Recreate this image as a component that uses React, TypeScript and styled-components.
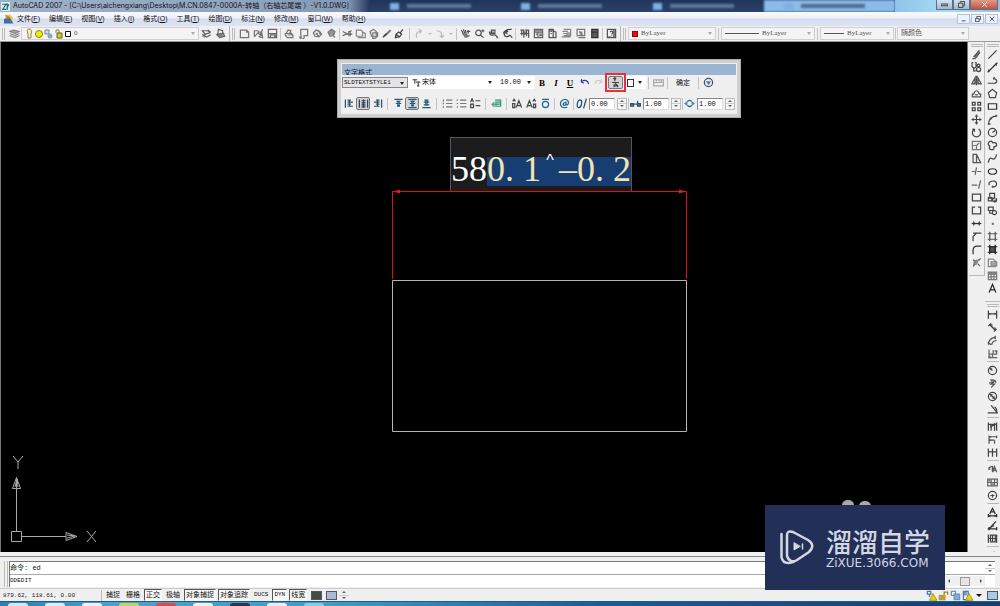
import React from 'react';
import styled, { createGlobalStyle } from 'styled-components';

const sans = `'Liberation Sans', 'Noto Sans CJK SC', sans-serif`;
const serif = `'Liberation Serif', 'Noto Sans CJK SC', serif`;
const mono = `'Liberation Mono', 'Noto Sans CJK SC', monospace`;

const GlobalStyle = createGlobalStyle`
  * { box-sizing: border-box; }
  body { margin: 0; background: #f0f0f0; font-family: ${sans}; color: #222; overflow: hidden; }
  button, select, input { font: inherit; color: inherit; margin: 0; padding: 0; border: 0; border-radius: 0; background: none; outline: none; }
  select { appearance: none; }
`;

/* ---------- icons: stroked (s) and filled (f) outlines on a 16-unit grid ---------- */

type Shape = { s?: string; f?: string; c?: string };

const shapes: Record<string, Shape> = {
  layers: { s: 'M1 5l6-2 8 2-6 3zM1 8l8 3 6-3M1 11l8 3 6-3', f: 'M1 5l6-2 8 2-6 3z', c: '#888' },
  layerPrev: { s: 'M2 4h8l3 3-7 2zM2 9l6 4 6-3M10 3l4 3', f: 'M1 12l5-4v6z', c: '#666' },
  layerState: { s: 'M5 2l6 2v4l-7 1zM2 9l5 5 7-2-2-5', f: 'M2 9l5 5 7-2-5-5z', c: '#666' },
  newDoc: { s: 'M2 3h9l3 3v8H2zM11 3v3h3', c: '#777' },
  open: { s: 'M2 13V4h5l1 2h5M2 13l5-6 3 3 4-8M9 13l4-5 1 6z', c: '#777' },
  save: { s: 'M2 2h12v12H2zM2 8h12M5 14v-4h7v4', f: 'M10 10h2v4h-2z', c: '#666' },
  plot: { s: 'M3 8l3-5 4 1-2 4M2 8h8l3 3v3H5l-3-3zM9 6l4 4', f: 'M5 9h7v2H5z', c: '#777' },
  preview: { s: 'M4 11V2h10v9H9M3 13a3 3 0 1 0 5-2', f: 'M2 11h4v4H2z', c: '#777' },
  publish: { s: 'M2 7l4-4 5 2 3 4-4 4-6-1zM6 8l5 5M9 3l3 6', f: 'M5 7h4v3H5z', c: '#777' },
  globe: { s: 'M3 6l5-4 5 3-2 6-5 1zM10 10l3 4', f: 'M3 6l5-4 5 3-2 6-5-1z', c: '#777' },
  cut: { s: 'M1 5l8 4h6M1 11l8-3M9 6l5-2', f: 'M9 6h4v6H9z', c: '#666' },
  copyClip: { s: 'M2 12V3h7l2 2v7zM5 12v2h10V8l-4-2', c: '#888' },
  paste: { s: 'M3 5l5-3 4 3v7H5zM7 7h7v5l-4 3H7z', c: '#777' },
  match: { s: 'M3 13l5-5', f: 'M6 9l7-7 2 2-7 7-6 4z', c: '#444' },
  brush: { s: 'M9 7l4-5M3 9l5 4 3-4-4-3zM3 9l-1 5 5-1', c: '#444' },
  undoGrey: { s: 'M4 14q-3-8 7-10M11 4l-4-2M11 4L8 8', c: '#bbb' },
  redoGrey: { s: 'M2 4q9 0 8 10M10 14l-3-3M10 14l3-4', c: '#bbb' },
  pan: { s: 'M2 3l3 6M5 2l2 6M8 3l1 5M10 12l4-1M12 3v5M10 5h5', f: 'M3 8h8v6H7z', c: '#555' },
  zoomRt: { s: 'M6 3a4 4 0 1 0 1 8a4 4 0 0 0-1-8M10 11l4 3M11 4h4M13 2v4', c: '#555' },
  zoomWin: { s: 'M5 3h5v5H5zM2 5q0 7 7 5M9 9l5 4', f: 'M3 5h6v4H3zM12 13h3v2h-3z', c: '#555' },
  zoomPrev: { s: 'M14 2q-9-1-12 6M9 5a4 4 0 1 0 2 5M11 10l4 4', f: 'M8 3v7L3 7z', c: '#444' },
  props: { s: 'M2 3h5v11M9 3h5v11M2 8h12M4 3v8M11 3v9', f: 'M6 5h4v5H6z', c: '#555' },
  design: { s: 'M2 2h12v12H2zM2 6h12M7 6v8M4 9h2M9 9h4M9 11h4', f: 'M2 2h12v3H2z', c: '#666' },
  palettes: { s: 'M3 2h6v12H3zM9 4l4 2v8H9M5 5h2M5 8h2', f: 'M3 2h6v3H3z', c: '#555' },
  sheets: { s: 'M4 2h10v9H4M2 5h8M3 8h7M1 13h13', f: 'M8 6h6v7H6z', c: '#888' },
  markup: { s: 'M3 2h11v9H3zM5 14h10M6 5l5 5', f: 'M7 5h4v5H7z', c: '#777' },
  calc: { s: 'M4 2h9v12H4zM4 6h9M6 9h1M10 9h1M6 12h1M10 12h1', f: 'M4 2h9v12H4z', c: '#333' },
  help: { s: 'M2 2h12v12H2zM6 6q2-3 4 0q0 2-2 3M8 11v1', f: 'M10 2h4v12h-4zM2 12h5v2H2z', c: '#555' },
  erase: { s: 'M2 14h5M4 12l8-10M7 13l6-8', f: 'M3 11l9-9 1 3-6 8z', c: '#555' },
  copyObj: { s: 'M2 4a3 3 0 1 0 5 0a3 3 0 1 0-5 0M9 5a2 2 0 1 0 4 0a2 2 0 1 0-4 0M8 11a3 3 0 1 0 6 0a3 3 0 1 0-6 0M4 8v5h3', c: '#444' },
  mirror: { s: 'M8 1v14M6 4v9H1zM10 4v9h5z', f: 'M6 9v4H2zM10 9v4h4z', c: '#555' },
  offset: { s: 'M2 13V9q3 0 3-3q3-4 6 0q0 3 3 3v4zM6 10h4', c: '#555' },
  array: { s: 'M2 2h4v4H2zM10 2h4v4h-4zM2 10h4v4H2zM10 10h4v4h-4z', c: '#444' },
  move: { s: 'M8 2v12M2 8h12', f: 'M8 0l3 4H5zM8 16l3-4H5zM0 8l4-3v6zM16 8l-4-3v6z', c: '#444' },
  rotate: { s: 'M5 3a6 6 0 1 0 6 0M5 3H2M5 3v4', c: '#444' },
  scale: { s: 'M2 2h12v12H2zM2 8h6v6M8 8l4-4', c: '#777' },
  stretch: { s: 'M3 2v12h11L8 2zM8 2v12', c: '#555' },
  trim: { s: 'M1 8h5M9 8h6M8 2l-2 11', c: '#666' },
  extend: { s: 'M1 9h8M11 9h2M14 2l-3 12', c: '#666' },
  breakPt: { s: 'M2 3h12v10H2z', c: '#444' },
  break2: { s: 'M6 3H2v10h12V3h-4', c: '#444' },
  join: { s: 'M1 8h14', f: 'M7 8L3 4v8zM9 8l4-4v8z', c: '#333' },
  chamfer: { s: 'M3 15V8l5-5h7M3 3h5', c: '#444' },
  fillet: { s: 'M3 15V9q0-6 6-6h6', c: '#333' },
  explode: { s: 'M3 14l3-4M11 5l3-3M3 4l3 2M10 10l3 3', f: 'M4 5l8-2-3 8-6 1z', c: '#666' },
  line: { s: 'M2 14L14 2', c: '#444' },
  xline: { s: 'M1 15L15 1', f: 'M1 15l1-5 3 3zM15 1l-1 5-3-3z', c: '#333' },
  pline: { s: 'M1 12h9q5 0 4-4q-1-3-5-2M9 6l2-3', c: '#444' },
  polygon: { s: 'M8 2l6 5-2 7H4L2 7z', c: '#444' },
  rect: { s: 'M2 4h12v8H2z', c: '#333' },
  arc: { s: 'M2 15Q3 3 14 3', f: 'M2 13h3v3H1zM12 1h3v3h-3zM4 5h3v3H4z', c: '#444' },
  circle: { s: 'M8 2a6 6 0 1 0 0 12a6 6 0 0 0 0-12M8 8l4-3', c: '#444' },
  cloud: { s: 'M3 3q4-3 5 1q6-1 6 3q0 3-4 3q1 5-4 4q-4-1-2-5q-4-3-1-6', c: '#444' },
  spline: { s: 'M2 14q1-8 5-6q5 3 7-6', c: '#444' },
  ellipse: { s: 'M8 4c8 0 8 8 0 8s-8-8 0-8', c: '#333' },
  ellArc: { s: 'M3 5q10-5 11 2q0 5-7 5M7 12l2-2M3 5l0 4', c: '#444' },
  block: { s: 'M4 2h7v7H4zM2 8h5v5H2zM9 9a3 3 0 1 0 4 0', f: 'M10 11h4v4h-4z', c: '#444' },
  makeBlock: { s: 'M2 3h7v5H2zM8 10a3 3 0 1 0 5-1a3 3 0 0 0-5 1M4 8v4h4', c: '#444' },
  point: { f: 'M7 7h3v3H7z', c: '#444' },
  hatch: { s: 'M4 1v14M12 1v14M1 4h14M1 12h14', c: '#555' },
  gradient: { s: 'M4 1v14M12 1v14M1 4h14M1 12h14', f: 'M3 3h10v10H3z', c: '#222' },
  region: { s: 'M2 3h7l3 3v8H2zM6 7h8v6H6z', f: 'M6 8h5v4H6z', c: '#888' },
  table: { s: 'M2 3h12v11H2zM2 6h12M2 10h12M6 3v11M10 3v11', f: 'M2 3h12v3H2z', c: '#777' },
  textA: { s: 'M3 14L8 2l5 12M5 10h6', c: '#222' },
  dimLin: { s: 'M2 2v12M14 2v12M2 7h12', f: 'M2 7l3-2v4zM14 7l-3-2v4z', c: '#444' },
  dimAli: { s: 'M4 4l8 8M2 6l4-4M10 14l4-4', f: 'M3 3h5v5zM8 8l5 5V8z', c: '#444' },
  dimArc: { s: 'M2 14q0-9 10-11M7 14q0-5 7-6M12 1v5M1 11l5 3', c: '#555' },
  dimOrd: { s: 'M3 2v12h12M3 9h6V3M8 13V9h6V4', f: 'M11 3h4v3h-4zM2 12h4v3H2z', c: '#666' },
  dimRad: { s: 'M8 2a6 6 0 1 0 0 12a6 6 0 0 0 0-12M8 8L4 5', f: 'M3 3l5 2-3 3z', c: '#444' },
  dimJog: { s: 'M5 3q8-1 8 4M11 5L6 9h5l-5 5M3 7h5', f: 'M5 2l6 3-4 3z', c: '#555' },
  dimDia: { s: 'M8 2a6 6 0 1 0 0 12a6 6 0 0 0 0-12M4 4l8 8', f: 'M4 4l5 1-4 4zM12 12l-5-1 4-4z', c: '#444' },
  dimAng: { s: 'M1 13h14L6 2M11 4q4 3 3 7', c: '#444' },
  dimQuick: { s: 'M2 2v12M14 2v12M2 5h12M6 14V8l5-4v10', f: 'M4 5h7L5 11z', c: '#444' },
  dimBase: { s: 'M3 2v12M3 4h11M3 9h8M11 9v5M14 2v4', f: 'M3 4l3-2v4zM3 9l3-2v4z', c: '#555' },
  dimCont: { s: 'M2 2v12M8 2v12M14 2v12M2 7h12', c: '#444' },
  leader: { s: 'M2 6l6-3M8 3v8M8 11l3-7 3 8M9 9h4', f: 'M1 9l5-1-3-3zM7 7h3v5H7z', c: '#555' },
  tol: { s: 'M1 3h14v10H1zM6 3v10M11 3v10M1 8h14', f: 'M2 4h3v3H2zM7 9h3v3H7z', c: '#666' },
  centerMark: { s: 'M8 2a6 6 0 1 0 0 12a6 6 0 0 0 0-12M8 6v5M5 8h6', c: '#444' },
  dimEdit: { s: 'M4 10l4-8 4 8M6 7h4M1 13h14M2 10v5M14 10v5', f: 'M1 13l4-2v4zM15 13l-4-2v4z', c: '#333' },
  dimTEdit: { s: 'M4 12L13 2M1 13h14M3 10v5M14 10v5', f: 'M4 12l5-6 2 3zM1 13l3-2v4z', c: '#333' },
  dimUpd: { s: 'M2 2v12M14 2v12M2 8h12M5 3h7v10H5zM8 3v10', c: '#444' },
  corner: { s: 'M9 14l6-8M13 14l2-4', c: '#777' },
  alignL: { s: 'M2 2v12M5 3h5M5 6h8M5 9h5M5 12h8M8 3v9', c: '#2c5068' },
  alignC: { s: 'M2 2v12M14 2v12M5 4h6M5 7h6M5 10h6M5 13h6M8 2v12', c: '#2c4058' },
  alignR: { s: 'M14 2v12M6 3h5M3 6h8M6 9h5M3 12h8M8 3v9', c: '#2c5068' },
  top: { s: 'M2 2h12M5 5h6M4 8h8M6 11h4', f: 'M6 5h4v8H6z', c: '#265a7c' },
  mid: { s: 'M2 2h12M2 14h12M5 5h6M4 8h8M6 11h4', f: 'M6 4h4v8H6z', c: '#265a7c' },
  bot: { s: 'M2 14h12M5 3h6M4 6h8M4 10h8', f: 'M6 3h4v8H6z', c: '#265a7c' },
  numList: { s: 'M2 2v3M2 7v2M2 12v2M6 3h9M6 8h9M6 13h9', c: '#777' },
  bullList: { s: 'M1 3h2M1 8h2M1 13h2M6 3h9M6 8h9M6 13h9', c: '#777' },
  upList: { s: 'M1 6l2-5 2 5M1 9h4v5H1zM8 4h7M8 11h7', c: '#444' },
  field: { s: 'M6 3h8v9H6M6 6h8M6 9h8', f: 'M0 9l5-4v3h4v3H5v3z', c: '#2a9a70' },
  upper: { s: 'M1 8h3v6H1zM6 14l4-10 4 10M7 11h5M1 5l2-3 2 3', c: '#444' },
  lower: { s: 'M1 14L5 4l4 10M3 11h5M11 9h3v5h-3zM10 5l2-3 2 3', c: '#444' },
  overline: { s: 'M3 2h10M8 5a4 4 0 1 0 0 9a4 4 0 0 0 0-9', c: '#1e6a94' },
  at: { s: 'M12 13q-4 2-8 0q-4-5 0-9q5-4 9 0q2 4-1 6q-2 0-2-5M10 7q-4-1-4 3q3 2 4-1', c: '#1e6a94' },
  oblique: { s: 'M7 3q-4-1-5 5q-1 6 2 6q4-1 4-6q1-4-1-5M15 1l-4 14', c: '#1e4a74' },
  track: { s: 'M1 8h4v4H1zM11 4v8h4V8h-4M6 9h4', f: 'M1 8h4v4H1zM11 8h4v4h-4z', c: '#27506e' },
  widthF: { s: 'M5 5q3-3 6 0M5 11q3 3 6 0', f: 'M0 8l5-4v8zM16 8l-5-4v8z', c: '#2b6c94' },
  undoBlue: { s: 'M3 7q9-5 11 3M3 7l1-4M3 7l4 2', c: '#33b' },
  redoLite: { s: 'M13 7Q4 2 3 10M13 7l-1-4M13 7l-4 2', c: '#ccc' },
  stack: { s: 'M7 1v5M5 3l2-2 2 2M3 8h10M6 15v-3l2-2 3 2v3M7 13h3', c: '#444' },
  ruler: { s: 'M1 4h14v9H1zM1 8h14M5 4v3M9 4v3M12 4v3', c: '#aaa' },
  options: { s: 'M8 2a6 6 0 1 0 0 12a6 6 0 0 0 0-12', f: 'M4 6h8l-4 6z', c: '#31557c' },
  tt: { s: 'M1 3h8M5 3v7M7 7h8M11 7v7M9 14h4', c: '#333' },
  tray1: { s: 'M2 2h5v4H2zM5 6v4', c: '#4a78b0' },
  unlock: { s: 'M9 7V3h5v4', f: 'M1 7h10v8H1z', c: '#a88400' },
  copyBlue: { s: 'M2 2h6v6H2zM6 6h8v8H6z', f: 'M6 6h8v8H6z', c: '#6a94c4' },
  tray4: { s: 'M2 2h7v12H2z', f: 'M2 2h5v6H2z', c: '#4a78b0' },
};

const Svg = styled.svg<{ $size: number }>`
  display: block;
  flex: none;
  width: ${(p) => p.$size}px;
  height: ${(p) => p.$size}px;
`;

function Icon({ name, size = 11, warn }: { name: string; size?: number; warn?: boolean }) {
  const { s, f, c = '#555' } = shapes[name];
  return (
    <Svg $size={size} viewBox="0 0 16 16" aria-hidden="true">
      {f && <path d={f} fill={c} fillOpacity={0.75} />}
      {s && <path d={s} fill="none" stroke={c} strokeWidth={1.8} />}
      {warn && <path d="M10 5l6 10H5z" fill="#f0d000" stroke="#987800" />}
    </Svg>
  );
}

/* ---------- frame ---------- */

const Window = styled.div`
  position: relative;
  display: flex;
  flex-direction: column;
  height: 100vh;
  overflow: hidden;
`;

const TitleBar = styled.header`
  display: flex;
  flex: none;
  align-items: center;
  height: 12px;
  background: linear-gradient(#20345a, #2b4268);
  overflow: hidden;
`;
const TitleText = styled.h1`
  display: flex;
  align-items: center;
  gap: 3px;
  flex: none;
  margin: 0;
  height: 12px;
  width: 370px;
  padding-left: 1px;
  font: 400 7px/12px Inter, 'Noto Sans CJK SC', sans-serif;
  color: #0c1220;
  white-space: nowrap;
  background: linear-gradient(90deg, #9db0c8, #93a6bf 60%, #8598b4 94%, #24385e);
`;
const BehindTabs = styled.div`
  display: flex;
  flex: 1;
  height: 12px;
  filter: blur(1px);
`;
const BehindTab = styled.div<{ $active?: boolean }>`
  display: flex;
  align-items: center;
  gap: 8px;
  flex: 1;
  padding-left: 20px;
  background: ${(p) => (p.$active ? '#8bbbe8' : 'transparent')};
  &::before { content: ''; width: 9px; height: 7px; background: #7fb0e4; }
  &::after { content: ''; width: 64px; height: 4px; background: ${(p) => (p.$active ? '#4a6c94' : '#60789c')}; }
`;
const TitleRight = styled.div`
  display: flex;
  justify-content: flex-end;
  align-items: flex-start;
  width: 105px;
  height: 12px;
  padding-right: 2px;
  background: linear-gradient(90deg, #8fc3ea, #a8dcf2 50%, #94bfe0);
`;
const CaptionButton = styled.button<{ $close?: boolean }>`
  display: flex;
  align-items: center;
  justify-content: center;
  width: ${(p) => (p.$close ? 28 : 17)}px;
  height: 10px;
  border: 1px solid #5a6f8a;
  border-top: 0;
  background: ${(p) => (p.$close ? 'linear-gradient(#e09a8c, #c8503c)' : 'linear-gradient(#d3e2f0, #a3b9d0)')};
  color: ${(p) => (p.$close ? '#fff' : '#333')};
`;

const MenuBar = styled.nav`
  display: flex;
  flex: none;
  align-items: center;
  gap: 3px;
  height: 14px;
  padding: 0 2px 0 4px;
  background: linear-gradient(#f8faff, #eef1fa 40%, #d8def0 50%, #dde3f5);
`;
const MenuItems = styled.div`
  display: flex;
  gap: 9px;
`;
const MenuItem = styled.button`
  font-size: 7px;
  line-height: 12px;
  white-space: nowrap;
  color: #111;
`;
const MdiButtons = styled.div`
  display: flex;
  margin-left: auto;
  gap: 1px;
`;
const MdiButton = styled.button`
  display: flex;
  align-items: center;
  justify-content: center;
  width: 13px;
  height: 10px;
  border: 1px solid #b4c4dc;
  background: #eaf2fc;
`;

/* ---------- toolbars ---------- */

const ToolRow = styled.div`
  display: flex;
  flex: none;
  height: 16px;
  background: #f0f0f0;
  border-bottom: 1px solid #999;
  overflow: hidden;
`;
const Strip = styled.div<{ $grow?: boolean }>`
  display: flex;
  align-items: center;
  flex: ${(p) => (p.$grow ? '1' : 'none')};
  padding-right: 2px;
  border-right: 1px solid ${(p) => (p.$grow ? 'transparent' : '#b4b4b4')};
`;
const Grip = styled.span`
  flex: none;
  width: 3px;
  height: 12px;
  margin: 0 2px 0 2px;
  border-left: 1px solid #bbb;
  border-right: 1px solid #bbb;
`;
const Group = styled.div`
  display: flex;
  align-items: center;
`;
const ToolButton = styled.button<{ $w?: number; $h?: number; $on?: boolean }>`
  display: flex;
  align-items: center;
  justify-content: center;
  flex: none;
  width: ${(p) => p.$w ?? 14}px;
  height: ${(p) => p.$h ?? 13}px;
  color: #333;
  border: ${(p) => (p.$on ? '1px solid #777' : '0')};
  border-radius: ${(p) => (p.$on ? 2 : 0)}px;
  background: ${(p) => (p.$on ? '#d4d4d4' : 'none')};
`;
const Sep = styled.span<{ $w?: number }>`
  flex: none;
  display: flex;
  justify-content: center;
  width: ${(p) => p.$w ?? 3}px;
  height: 12px;
  &::before { content: ''; width: 1px; background: #c4c4c4; }
`;
const Combo = styled.label<{ $w: number; $plain?: boolean }>`
  position: relative;
  display: flex;
  align-items: center;
  gap: 1px;
  flex: none;
  width: ${(p) => p.$w}px;
  height: 13px;
  padding: 0 10px 0 3px;
  border: 1px solid ${(p) => (p.$plain ? 'transparent' : '#d0d0d0')};
  background: ${(p) => (p.$plain ? '#fff' : '#f4f4f4')};
  font: 7px/11px ${serif};
  color: #555;
  select { flex: 1; min-width: 0; height: 11px; }
`;
const Arrow = styled.span<{ $dark?: boolean }>`
  position: absolute;
  right: 3px;
  top: 4px;
  border: 2px solid transparent;
  border-top: 3px solid ${(p) => (p.$dark ? '#222' : '#aaa')};
  border-bottom: 0;
  pointer-events: none;
`;
const Swatch = styled.span<{ $color: string }>`
  flex: none;
  width: 6px;
  height: 6px;
  margin-right: 2px;
  background: ${(p) => p.$color};
  border: 1px solid #a00;
`;
const LineSample = styled.span<{ $w: number }>`
  flex: none;
  width: ${(p) => p.$w}px;
  height: 1px;
  margin-right: 2px;
  background: #555;
`;
const DropMark = styled.button`
  width: 9px;
  height: 12px;
  display: flex;
  align-items: center;
  justify-content: center;
  &::before { content: ''; border: 2px solid transparent; border-top-color: #bbb; border-bottom: 0; }
`;

function Tools({ names, w, h }: { names: string[]; w?: number; h?: number }) {
  return (
    <>
      {names.map((n) => (
        <ToolButton key={n} type="button" aria-label={n} $w={w} $h={h}><Icon name={n} /></ToolButton>
      ))}
    </>
  );
}

/* ---------- work area ---------- */

const Work = styled.main`
  display: flex;
  flex: 1;
  min-height: 0;
  overflow: hidden;
`;
const Canvas = styled.section`
  position: relative;
  flex: 1;
  min-width: 0;
  background: #000;
  border-left: 1px solid #777;
  border-right: 1px solid #777;
  overflow: hidden;
`;
const Drawing = styled.svg`
  position: absolute;
  inset: 0;
  width: 100%;
  height: 100%;
`;
const Ucs = styled.svg`
  position: absolute;
  left: 9px;
  bottom: 5px;
  width: 90px;
  height: 92px;
`;
const Dock = styled.aside`
  display: flex;
  flex: none;
  align-items: flex-start;
  background: #f0f0f0;
  width: 32px;
  padding-left: 1px;
`;
const DockColumn = styled.div`
  display: flex;
  flex-direction: column;
  width: 16px;
  flex: none;
`;
const Palette = styled.div<{ $last?: boolean }>`
  display: flex;
  flex-direction: column;
  align-items: center;
  padding-bottom: ${(p) => (p.$last ? 0 : 6)}px;
  border-right: 1px solid #bbb;
  border-bottom: ${(p) => (p.$last ? 0 : 1)}px solid #bbb;
`;
const HGrip = styled.span`
  width: 12px;
  height: 3px;
  margin: 2px 0 1px;
  border-top: 1px solid #bbb;
  border-bottom: 1px solid #bbb;
`;
const HSep = styled.span`
  width: 12px;
  height: 1px;
  margin: 1px 0 2px;
  background: #bbb;
`;

/* ---------- text formatting window ---------- */

const Format = styled.form`
  position: absolute;
  left: 336px;
  top: 17px;
  width: 404px;
  height: 59px;
  padding: 4px;
  background: #efefef;
  border: 1px solid #aaa;
  box-shadow: inset 0 0 0 3px #cfcfcf;
  font: 7px/10px ${serif};
`;
const FormatTitle = styled.div`
  height: 11px;
  padding: 5px 0 0 2px;
  overflow: hidden;
  background: #9ab4d2;
  font: 7px/8px ${sans};
  color: #123;
`;
const FormatRow = styled.div`
  display: flex;
  align-items: center;
  height: 15px;
  & + & { margin-top: 6px; }
`;
const StyleBox = styled(Combo)`
  height: 11px;
  padding-left: 1px;
  border: 1px solid #888;
  background: #e4e4e4;
  font: 6px/9px ${mono};
  color: #111;
  select { height: 9px; }
`;
const FontBox = styled(Combo)`
  height: 13px;
  font-family: ${mono};
  color: #111;
`;
const Letter = styled(ToolButton)<{ $kind: 'b' | 'i' | 'u' }>`
  font: ${(p) => (p.$kind === 'i' ? 'italic ' : '')}700 9px/12px ${serif};
  text-decoration: ${(p) => (p.$kind === 'u' ? 'underline' : 'none')};
  color: #000;
`;
const StackFrame = styled.span`
  display: flex;
  align-items: center;
  justify-content: center;
  flex: none;
  width: 21px;
  height: 19px;
  border: 2px solid #e8303a;
`;
const OkButton = styled.button`
  width: 26px;
  font: 7px/12px ${sans};
  color: #111;
`;
const ColorBox = styled(Combo)`
  padding-left: 0;
  height: 13px;
  &::before { content: ''; width: 6px; height: 6px; border: 1px solid #333; background: #fff; }
`;
const NumberBox = styled.label`
  display: flex;
  align-items: center;
  flex: none;
  gap: 2px;
  input {
    width: 26px;
    height: 12px;
    padding-left: 1px;
    border: 1px solid #888;
    border-right-color: #ddd;
    border-bottom-color: #ddd;
    background: #fff;
    font: 7px/9px ${mono};
    color: #111;
  }
`;
const Spin = styled.span`
  display: flex;
  flex-direction: column;
  width: 10px;
  height: 12px;
  border: 1px solid #bbb;
  background: #f4f4f4;
`;
const SpinButton = styled.button<{ $down?: boolean }>`
  display: flex;
  flex: 1;
  align-items: center;
  justify-content: center;
  &::before {
    content: '';
    border: 2px solid transparent;
    border-${(p) => (p.$down ? 'top' : 'bottom')}-color: #567;
    border-${(p) => (p.$down ? 'bottom' : 'top')}: 0;
  }
  & + & { border-top: 1px solid #ccc; }
`;

function Numeric({ icon, label, value }: { icon: string; label: string; value: string }) {
  return (
    <NumberBox>
      <Icon name={icon} />
      <input aria-label={label} defaultValue={value} />
      <Spin>
        <SpinButton type="button" aria-label={`${label} up`} />
        <SpinButton type="button" $down aria-label={`${label} down`} />
      </Spin>
    </NumberBox>
  );
}

/* ---------- in-place dimension text ---------- */

const InPlace = styled.div`
  position: absolute;
  left: 449px;
  top: 95px;
  display: flex;
  align-items: flex-end;
  width: 182px;
  height: 54px;
  padding-bottom: 5px;
  background: #1c1c1c;
  border: 1px solid #555;
  border-bottom: 0;
  font: 36px/25px ${serif};
  color: #fff;
`;
const Run = styled.span<{ $sel?: boolean }>`
  display: flex;
  height: 29px;
  background: ${(p) => (p.$sel ? '#163e72' : 'none')};
  color: ${(p) => (p.$sel ? '#f3e3b0' : '#fff')};
`;
const Cell = styled.span<{ $mark?: boolean }>`
  width: 18px;
  text-align: ${(p) => (p.$mark ? 'center' : 'left')};
  font-family: ${(p) => (p.$mark ? sans : serif)};
  font-size: ${(p) => (p.$mark ? 16 : 36)}px;
  line-height: ${(p) => (p.$mark ? 7 : 25)}px;
  color: ${(p) => (p.$mark ? '#fff' : 'inherit')};
`;

/* ---------- command line, status, task bar ---------- */

const Command = styled.section`
  display: flex;
  flex: none;
  height: 36px;
  padding: 9px 5px 1px 4px;
  background: linear-gradient(#f0f0f0 4px, #888 4px, #888 5px, #f0f0f0 5px);
`;
const CommandGrip = styled.span`
  width: 4px;
  border-left: 1px solid #bbb;
  border-right: 1px solid #bbb;
`;
const CommandBody = styled.div`
  flex: 1;
  display: flex;
  flex-direction: column;
  margin-left: 1px;
  border-left: 1px solid #777;
  border-top: 1px solid #777;
  background: #fff;
`;
const CommandLine = styled.div`
  display: flex;
  align-items: center;
  flex: 1;
  font: 6px/12px ${mono};
  color: #111;
  & + & { border-top: 1px solid #aaa; }
  input { flex: 1; height: 11px; }
`;
const CommandLog = styled.span`
  flex: 1;
  font: 7px/12px ${mono};
`;
const Stepper = styled.div`
  display: flex;
  flex-direction: column;
  width: 10px;
  height: 12px;
`;
const HScroll = styled.div`
  display: flex;
  align-items: center;
  justify-content: space-between;
  width: 40px;
  height: 10px;
  margin-right: 10px;
  background: #f0f0f0;
`;
const Side = styled.button<{ $right?: boolean }>`
  display: flex;
  width: 8px;
  justify-content: center;
  &::before {
    content: '';
    border: 2px solid transparent;
    border-${(p) => (p.$right ? 'left' : 'right')}-color: #456;
    border-${(p) => (p.$right ? 'right' : 'left')}: 0;
  }
`;
const Thumb = styled.span`
  width: 10px;
  height: 9px;
  border: 1px solid #999;
  background: #e4e4e4;
`;
const Status = styled.footer`
  display: flex;
  flex: none;
  align-items: center;
  gap: 2px;
  height: 13px;
  padding-right: 2px;
  background: #f0f0f0;
  border-top: 1px solid #ccc;
`;
const Coords = styled.output`
  width: 102px;
  padding-left: 3px;
  font: 6px/11px ${mono};
  color: #222;
  border-right: 1px solid #bbb;
`;
const Mode = styled.button<{ $on?: boolean }>`
  height: 12px;
  padding: 0 1px;
  font: 7px/10px ${serif};
  white-space: nowrap;
  color: #111;
  border: 1px solid transparent;
  border-left-color: ${(p) => (p.$on ? '#555' : 'transparent')};
  border-top-color: ${(p) => (p.$on ? '#555' : 'transparent')};
  background: ${(p) => (p.$on ? '#f8f8f8' : 'none')};
`;
const ModeCode = styled(Mode)`
  font: 6px/10px ${mono};
`;
const Chip = styled.span<{ $color: string }>`
  width: 11px;
  height: 9px;
  margin-left: 2px;
  background: ${(p) => p.$color};
  border: 1px solid #556;
`;
const Tray = styled.div`
  display: flex;
  align-items: center;
  gap: 1px;
  margin-left: auto;
`;
const TrayMenu = styled(DropMark)`
  width: 10px;
  &::before { border-width: 3px; border-top-color: #111; border-bottom: 0; }
`;
const Taskbar = styled.div`
  display: flex;
  flex: none;
  align-items: flex-end;
  gap: 17px;
  height: 5px;
  padding: 0 24px 0 8px;
  overflow: hidden;
  background: linear-gradient(90deg, #2c7fb4, #4aa4cc 12%, #3f9cc6 33%, #1b5c96 60%, #153e70);
  border-top: 1px solid #1c5c8c;
`;
const TaskIcon = styled.span<{ $color: string }>`
  width: 20px;
  height: 3px;
  border-radius: 8px 8px 0 0;
  background: ${(p) => p.$color};
`;

/* ---------- site badge ---------- */

const Badge = styled.div`
  position: absolute;
  right: 55px;
  bottom: 16px;
  display: flex;
  align-items: center;
  gap: 11px;
  width: 180px;
  height: 85px;
  padding: 0 0 1px 14px;
  background: #222f57;
  color: #d3d7e2;
`;
const BadgeText = styled.div`
  font: 500 26px/32px 'Noto Sans CJK SC', sans-serif;
  white-space: nowrap;
`;
const BadgeSite = styled.div`
  font: 12px/12px 'DejaVu Sans', sans-serif;
`;

const menus = ['文件(F)', '编辑(E)', '视图(V)', '插入(I)', '格式(O)', '工具(T)', '绘图(D)', '标注(N)', '修改(M)', '窗口(W)', '帮助(H)'];
const modes: [string, boolean][] = [
  ['捕捉', false], ['栅格', false], ['正交', true], ['极轴', false], ['对象捕捉', true],
  ['对象追踪', true], ['DUCS', false], ['DYN', true], ['线宽', true],
];
const modify = ['erase', 'copyObj', 'mirror', 'offset', 'array', 'move', 'rotate', 'scale', 'stretch', 'trim', 'extend', 'breakPt', 'break2', 'join', 'chamfer', 'fillet', 'explode'];
const draw = ['line', 'xline', 'pline', 'polygon', 'rect', 'arc', 'circle', 'cloud', 'spline', 'ellipse', 'ellArc', 'block', 'makeBlock', 'point', 'hatch', 'gradient', 'region', 'table', 'textA'];
const dims = [
  ['dimLin', 'dimAli', 'dimArc', 'dimOrd'],
  ['dimRad', 'dimJog', 'dimDia', 'dimAng'],
  ['dimQuick', 'dimBase', 'dimCont'],
  ['leader', 'tol', 'centerMark'],
  ['dimEdit', 'dimTEdit', 'dimUpd'],
];

function WindowMark({ d, size = 7 }: { d: string; size?: number }) {
  return (
    <Svg $size={size} viewBox="0 0 8 8" fill="none" stroke="currentColor" aria-hidden="true">
      <path d={d} />
    </Svg>
  );
}

function TopTools() {
  return (
    <ToolRow>
      <Strip>
        <Grip />
        <ToolButton aria-label="layers"><Icon name="layers" /></ToolButton>
        <Combo $w={178}>
          <Svg $size={48} viewBox="0 0 48 48" aria-hidden="true">
            <path d="M3 24q-2-5 1-5q4 0 2 5v4H3z" fill="#f5f29a" stroke="#887" />
            <circle cx="14" cy="24" r="3.500" fill="#f0f000" stroke="#880" />
            <path d="M20 20h4v4h-4z" fill="#cde" stroke="#789" />
            <circle cx="25" cy="26" r="2.500" fill="#8ab" />
            <path d="M31 23v-3h3v3" fill="none" stroke="#884" />
            <path d="M32 23h5v5h-5z" fill="#cc2" stroke="#662" />
            <path d="M40.500 21.500h5v5h-5z" fill="#fff" stroke="#111" />
          </Svg>
          <select aria-label="图层"><option>0</option></select>
          <Arrow />
        </Combo>
        <Group><Tools names={['layerPrev', 'layerState']} /></Group>
      </Strip>
      <Strip>
        <Grip />
        <Group><Tools names={['newDoc', 'open', 'save']} /></Group>
        <Sep />
        <Group><Tools names={['plot', 'preview', 'publish', 'globe']} /></Group>
        <Sep />
        <Group><Tools w={13} names={['cut', 'copyClip', 'paste', 'match', 'brush']} /></Group>
        <Sep $w={7} />
        <ToolButton $w={12} aria-label="undo"><Icon name="undoGrey" /></ToolButton>
        <DropMark aria-label="undo list" />
        <ToolButton $w={12} aria-label="redo"><Icon name="redoGrey" /></ToolButton>
        <DropMark aria-label="redo list" />
        <Sep />
        <Group><Tools names={['pan', 'zoomRt', 'zoomWin', 'zoomPrev']} /></Group>
        <Sep />
        <Group><Tools names={['props', 'design', 'palettes', 'sheets', 'markup', 'calc']} /></Group>
        <Sep />
        <Tools names={['help']} />
      </Strip>
      <Strip $grow>
        <Grip />
        <Combo $w={88}><Swatch $color="#e01010" /><select aria-label="颜色"><option>ByLayer</option></select><Arrow /></Combo>
        <Sep $w={5} />
        <Combo $w={94}><LineSample $w={34} /><select aria-label="线型"><option>ByLayer</option></select><Arrow /></Combo>
        <Sep $w={5} />
        <Combo $w={74}><LineSample $w={20} /><select aria-label="线宽"><option>ByLayer</option></select><Arrow /></Combo>
        <Sep />
        <Combo $w={72}><select aria-label="打印样式"><option>随颜色</option></select><Arrow /></Combo>
      </Strip>
    </ToolRow>
  );
}

function TextFormat() {
  return (
    <Format onSubmit={(e) => e.preventDefault()}>
      <FormatTitle>文字格式</FormatTitle>
      <FormatRow>
        <StyleBox $w={66}><select aria-label="样式"><option>SLDTEXTSTYLE1</option></select><Arrow $dark /></StyleBox>
        <FontBox $w={88} $plain><Icon name="tt" size={9} /><select aria-label="字体"><option>宋体</option></select><Arrow $dark /></FontBox>
        <FontBox $w={39} $plain><select aria-label="文字高度"><option>10.00</option></select><Arrow $dark /></FontBox>
        <Letter type="button" $kind="b">B</Letter>
        <Letter type="button" $kind="i">I</Letter>
        <Letter type="button" $kind="u">U</Letter>
        <Tools names={['undoBlue', 'redoLite']} />
        <StackFrame><ToolButton type="button" aria-label="stack" $on $w={15}><Icon name="stack" /></ToolButton></StackFrame>
        <ColorBox $w={20} $plain><select aria-label="文字颜色"><option> </option></select><Arrow $dark /></ColorBox>
        <Sep $w={5} />
        <Tools names={['ruler']} />
        <Sep $w={5} />
        <OkButton type="submit">确定</OkButton>
        <Sep $w={5} />
        <Tools names={['options']} />
      </FormatRow>
      <FormatRow>
        <ToolButton type="button" aria-label="left"><Icon name="alignL" /></ToolButton>
        <ToolButton type="button" aria-label="center" $on><Icon name="alignC" /></ToolButton>
        <ToolButton type="button" aria-label="right"><Icon name="alignR" /></ToolButton>
        <Sep $w={7} />
        <ToolButton type="button" aria-label="top"><Icon name="top" /></ToolButton>
        <ToolButton type="button" aria-label="middle" $on><Icon name="mid" /></ToolButton>
        <ToolButton type="button" aria-label="bottom"><Icon name="bot" /></ToolButton>
        <Sep $w={7} />
        <Tools names={['numList', 'bullList', 'upList']} />
        <Sep $w={7} />
        <Tools names={['field']} />
        <Sep $w={7} />
        <Tools names={['upper', 'lower', 'overline']} />
        <Sep $w={5} />
        <Tools names={['at']} />
        <Sep $w={5} />
        <Numeric icon="oblique" label="倾斜角度" value="0.00" />
        <Sep />
        <Numeric icon="track" label="追踪" value="1.00" />
        <Sep />
        <Numeric icon="widthF" label="宽度比例" value="1.00" />
      </FormatRow>
    </Format>
  );
}

export default function App() {
  return (
    <Window>
      <GlobalStyle />
      <TitleBar>
        <TitleText>
          <Svg $size={9} viewBox="0 0 16 16" aria-hidden="true">
            <path d="M0 0h16v16H0z" fill="#d8eeee" />
            <path d="M2 4h7l-6 9h6M11 2v12M14 4l-4 8" fill="none" stroke="#256a70" strokeWidth="2" />
          </Svg>
          AutoCAD 2007 - [C:\Users\aichengxiang\Desktop\M.CN.0847-0000A-转轴（右轴芯尾端 ）-V1.0.DWG]
        </TitleText>
        <BehindTabs><BehindTab /><BehindTab /><BehindTab /><BehindTab $active /></BehindTabs>
        <TitleRight>
          <CaptionButton aria-label="minimize"><WindowMark d="M0 3.500h8v2H0z" /></CaptionButton>
          <CaptionButton aria-label="restore"><WindowMark d="M.500 2.500h5v5h-5zM2.500 2V.500h5v5H6" /></CaptionButton>
          <CaptionButton $close aria-label="close"><WindowMark d="M1 1l6 6M7 1L1 7" /></CaptionButton>
        </TitleRight>
      </TitleBar>
      <MenuBar>
        <Svg $size={10} viewBox="0 0 16 16" aria-hidden="true">
          <path d="M2 1h8l4 5v5H2z" fill="#f0c83c" />
          <path d="M0 8l9-3 6 10H0z" fill="#3c6ea8" />
          <path d="M2 1l8 4-4 4z" fill="#c87828" />
        </Svg>
        <MenuItems>
          {menus.map((m) => <MenuItem key={m}>{m.slice(0, 3)}<u>{m[3]}</u>)</MenuItem>)}
        </MenuItems>
        <MdiButtons>
          <MdiButton aria-label="minimize drawing"><WindowMark size={6} d="M1 6.500h5" /></MdiButton>
          <MdiButton aria-label="restore drawing"><WindowMark size={6} d="M.500 3.500h5v4h-5zM2.500 3V.500h5v4H6" /></MdiButton>
          <MdiButton aria-label="close drawing"><WindowMark size={6} d="M1 1l6 6M7 1L1 7" /></MdiButton>
        </MdiButtons>
      </MenuBar>
      <TopTools />
      <Work>
        <Canvas>
          <Drawing aria-hidden="true">
            <path d="M391.500 238.500h294v151h-294z" fill="none" stroke="#b4b4b4" />
            <path d="M391.500 237V149.500h294V237" fill="none" stroke="#d4141c" />
            <path d="M392 149.500l7-2v4zM685 149.500l-7-2v4z" fill="#e01820" />
            <ellipse cx="847" cy="463" rx="6" ry="5" fill="#aaa" />
            <ellipse cx="864" cy="464" rx="6" ry="5" fill="#aaa" />
          </Drawing>
          <Ucs viewBox="0 0 90 92" fill="none" stroke="#aaa" aria-hidden="true">
            <path d="M1.500 76.500h10v10h-10zM6.500 76V24M12 81.500h44M2.500 33.500l4-11 4 11zM56 77.500l11 4-11 4zM5 32l2-8 1 8M57 80l8 1-8 2" />
            <path d="M3 1l5 6 5-6M8 7v7M77 76l9 11M86 76l-9 11" />
          </Ucs>
          <InPlace>
            <Run>58</Run>
            <Run $sel>
              {[...'0.1'].map((c, i) => <Cell key={i}>{c}</Cell>)}
              <Cell $mark>^</Cell>
              {[...'–0.2'].map((c, i) => <Cell key={i}>{c}</Cell>)}
            </Run>
          </InPlace>
          <TextFormat />
        </Canvas>
        <Dock>
          <DockColumn>
            <Palette><HGrip /><Tools h={13} names={modify} /></Palette>
          </DockColumn>
          <DockColumn>
            <Palette><HGrip /><Tools h={13} names={draw} /></Palette>
            <Palette $last>
              <HGrip />
              {dims.map((g) => (
                <React.Fragment key={g[0]}><Tools h={13} names={g} /><HSep /></React.Fragment>
              ))}
              <Icon name="corner" size={5} />
            </Palette>
          </DockColumn>
        </Dock>
      </Work>
      <Command>
        <CommandGrip />
        <CommandBody>
          <CommandLine>
            <CommandLog>命令: ed</CommandLog>
            <Stepper>
              <SpinButton aria-label="scroll up" />
              <SpinButton $down aria-label="scroll down" />
            </Stepper>
          </CommandLine>
          <CommandLine>
            <input aria-label="命令行" defaultValue="DDEDIT" />
            <HScroll>
              <Side aria-label="scroll left" />
              <Thumb />
              <Side $right aria-label="scroll right" />
            </HScroll>
          </CommandLine>
        </CommandBody>
      </Command>
      <Status>
        <Coords>879.62, 118.61, 0.00</Coords>
        {modes.map(([m, on]) =>
          m.startsWith('D') ? <ModeCode key={m} $on={on}>{m}</ModeCode> : <Mode key={m} $on={on}>{m}</Mode>
        )}
        <Chip $color="#444a44" />
        <Chip $color="#a8bcd8" />
        <Stepper>
          <SpinButton aria-label="next layout" />
          <SpinButton $down aria-label="previous layout" />
        </Stepper>
        <Tray>
          <Icon name="tray1" warn /><Icon name="unlock" /><Icon name="copyBlue" /><Icon name="tray4" warn />
          <TrayMenu aria-label="tray menu" />
          <Chip $color="#a8c8ec" />
        </Tray>
      </Status>
      <Taskbar>
        {['#cfe8f4', '#d8eef8', '#e8f4fa', '#b8d860', '#e04848', '#e8f4ea', '#283850', '#e8eef4', '#8ccbe4'].map((c, i) => (
          <TaskIcon key={i} $color={c} />
        ))}
      </Taskbar>
      <Badge>
        <Svg $size={36} viewBox="0 0 36 36" fill="none" stroke="#d3d7e2" strokeWidth="2.500" strokeLinecap="round" strokeLinejoin="round" aria-hidden="true">
          <path d="M2.500 5v23q1 6 7 6q3 0 5-1" />
          <path d="M8 27V6q0-5 6-3l15 8q8 5 1 12l-12 8q-7 4-10-4" />
          <path d="M15 14v7l6-3.500z" fill="#d3d7e2" strokeWidth="1" />
          <path d="M23.500 15v5" strokeWidth="1.500" />
        </Svg>
        <div>
          <BadgeText>溜溜自学</BadgeText>
          <BadgeSite>ZiXUE.3066.COM</BadgeSite>
        </div>
      </Badge>
    </Window>
  );
}
